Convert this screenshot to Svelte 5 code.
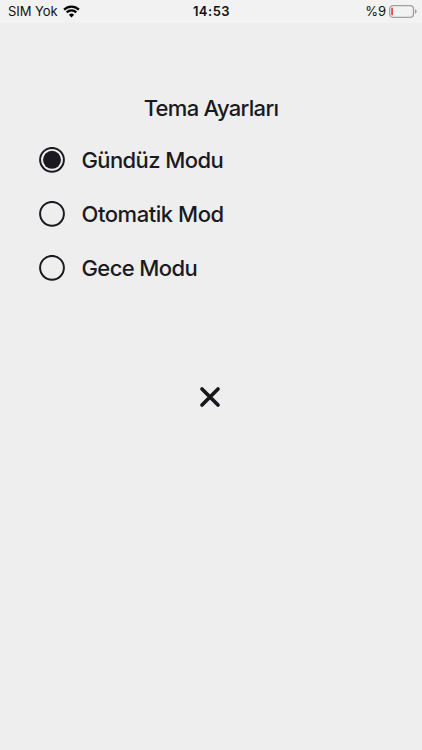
<script>
  const options = [
    { id: 'day', label: 'Gündüz Modu' },
    { id: 'auto', label: 'Otomatik Mod' },
    { id: 'night', label: 'Gece Modu' }
  ];
  let selected = $state('day');
</script>

<div class="screen">
  <header class="status">
    <div class="left">
      <span>SIM Yok</span>
      <svg class="wifi" width="17" height="13" viewBox="0 0 17 13">
        <path d="M1.1 4.6a10.6 10.6 0 0 1 14.8 0M3.7 7.4a6.9 6.9 0 0 1 9.6 0" fill="none" stroke="#000" stroke-width="2.3" />
        <path d="M8.5 12.4 5.9 9.8a3.7 3.7 0 0 1 5.2 0z" fill="#000" />
      </svg>
    </div>
    <time>14:53</time>
    <div class="right">
      <span>%9</span>
      <svg class="battery" width="28" height="13" viewBox="0 0 28 13">
        <rect x=".7" y=".7" width="23.8" height="11.6" rx="3.2" fill="none" stroke="#a0a0a0" stroke-width="1.3" />
        <rect x="2.2" y="2.6" width="1.8" height="7.8" rx=".8" fill="#ec4c40" />
        <path d="M26 4.3a2.3 2.3 0 0 1 0 4.4z" fill="#a2a2a2" />
      </svg>
    </div>
  </header>
  <main>
    <h1>Tema Ayarları</h1>
    <div class="options" role="radiogroup" aria-label="Tema Ayarları">
      {#each options as option}
        <button class="option {option.id}" role="radio" aria-checked={selected === option.id} onclick={() => (selected = option.id)}>
          <svg width="26" height="26" viewBox="0 0 26 26">
            <circle cx="13" cy="12.8" r="11.9" fill="none" stroke="#1a1a20" stroke-width="2" />
            {#if selected === option.id}<circle cx="13" cy="12.8" r="9" fill="#1a1a23" />{/if}
          </svg>
          <span>{option.label}</span>
        </button>
      {/each}
    </div>
    <button class="close" aria-label="Kapat">
      <svg width="22" height="22" viewBox="0 0 22 22">
        <path d="M3 3 19 19M19 3 3 19" stroke="#17181c" stroke-width="3.7" stroke-linecap="round" />
      </svg>
    </button>
  </main>
</div>

<style>
  :global(body) { margin: 0; background: #eee; }
  .screen { width: 422px; height: 750px; background: #eee; color: #1a1a20; font-family: Inter, sans-serif; overflow: hidden; }
  .status { height: 23px; background: #f2f2f2; color: #111; display: grid; grid-template-columns: 1fr auto 1fr; align-items: center; padding: 0 6px 0 8px; box-sizing: border-box; font-size: 13px; }
  .left, .right { display: flex; align-items: center; gap: 6px; }
  .left { letter-spacing: -.05px; gap: 5.5px; }
  .right { justify-content: flex-end; gap: 3px; margin-right: -1px; }
  time { font-weight: 600; letter-spacing: .5px; margin-right: 1px; }
  .status span, time { line-height: 15px; padding-bottom: 1px; }
  main { display: flex; flex-direction: column; align-items: center; padding-top: 70px; }
  h1 { margin: 0; font-size: 22px; line-height: 30px; font-weight: 500; letter-spacing: -.7px; }
  .options { align-self: stretch; padding: 10px 39px 0; display: flex; flex-direction: column; }
  button { border: 0; background: none; padding: 0; color: inherit; font: inherit; }
  .option { height: 54px; display: flex; align-items: center; gap: 16.5px; font-size: 22px; font-weight: 500; letter-spacing: -.6px; text-align: left; }
  .auto { letter-spacing: -.45px; }
  svg { display: block; }
  .close { margin: 91px 2px 0 0; }
</style>
